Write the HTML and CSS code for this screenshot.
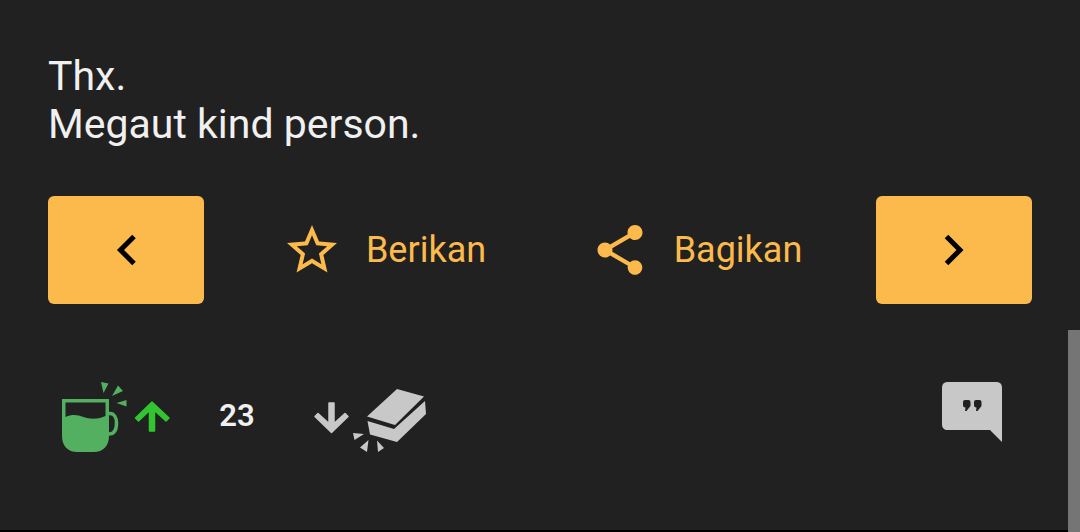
FILE: index.html
```html
<!DOCTYPE html>
<html lang="id">
<head>
<meta charset="utf-8">
<meta name="viewport" content="width=device-width, initial-scale=1">
<title>Megaut kind person</title>
<link rel="stylesheet" href="styles.css">
</head>
<body>
<main class="post">
  <p class="post-text">Thx.<br>Megaut kind person.</p>

  <nav class="post-nav">
    <button class="step" type="button" aria-label="Sebelumnya">
      <svg class="icon-step" viewBox="0 0 24 36"><path d="M20 4.500 6.500 18 20 31.500" fill="none" stroke="currentColor" stroke-width="5"/></svg>
    </button>
    <div class="actions">
      <button class="action" type="button">
        <svg class="icon-action" viewBox="0 0 24 24" fill="currentColor"><path d="M22 9.240l-7.190-.620L12 2 9.190 8.630 2 9.240l5.460 4.730L5.820 21 12 17.270 18.180 21l-1.630-7.030L22 9.240zM12 15.400l-3.760 2.270 1-4.280-3.320-2.880 4.380-.380L12 6.100l1.710 4.040 4.380.380-3.320 2.880 1 4.280L12 15.400z"/></svg>
        <span>Berikan</span>
      </button>
      <button class="action" type="button">
        <svg class="icon-action" viewBox="0 0 24 24" fill="currentColor"><path d="M18 16.080c-.760 0-1.440.300-1.960.770L8.910 12.700c.050-.230.090-.460.090-.700s-.040-.470-.090-.700l7.050-4.110c.540.500 1.250.810 2.040.810 1.660 0 3-1.340 3-3s-1.340-3-3-3-3 1.340-3 3c0 .240.040.470.090.700L8.040 9.810C7.500 9.310 6.790 9 6 9c-1.660 0-3 1.340-3 3s1.340 3 3 3c.790 0 1.500-.310 2.040-.810l7.120 4.160c-.050.210-.080.430-.080.650 0 1.610 1.310 2.920 2.920 2.920s2.920-1.310 2.920-2.920-1.310-2.920-2.920-2.920z"/></svg>
        <span>Bagikan</span>
      </button>
    </div>
    <button class="step" type="button" aria-label="Berikutnya">
      <svg class="icon-step" viewBox="0 0 24 36"><path d="M4.500 4.500 18 18 4.500 31.500" fill="none" stroke="currentColor" stroke-width="5"/></svg>
    </button>
  </nav>

  <div class="votes">
    <button class="vote" type="button" aria-label="Suka">
      <svg class="icon-up" viewBox="60 380 112 74">
        <g fill="#52b060">
          <path fill-rule="evenodd" d="M62 399h47v37c0 10-6 16-15 16H77c-9 0-15-6-15-16zM65.500 402.500V417c7-3 12-2 18 0s13 3 22-1v-13.500z"/>
          <path d="M101 382l7.500 1.500-5 9.500zM118 385.500l5 5.500-11 5zM116.500 403l10-3v6.500z"/>
        </g>
        <path d="M108 413.500h2c4 0 6.500 4 6.500 9.500 0 7-2.500 11-7.500 11h-1" fill="none" stroke="#52b060" stroke-width="3.500"/>
        <path d="M152 402l17 16-3 3-11.500-10.500V431h-5v-20.500L138.500 421l-3-3z" fill="#32c532" stroke="#32c532" stroke-width="1.500" stroke-linejoin="round"/>
      </svg>
    </button>
    <output class="score">23</output>
    <button class="vote" type="button" aria-label="Tidak suka">
      <svg class="icon-down" viewBox="312 380 116 74">
        <path d="M331.500 432.500l-16.500-16 3-3 11 10V403h5v20.500l11-10 3 3z" fill="#c8c8c8" stroke="#c8c8c8" stroke-width="1.500" stroke-linejoin="round"/>
        <path fill="#c8c8c8" d="M397 389l27 7.500L395 425l-28-8.500zM367.500 421l26.500 8 31-28 1 13L397 442l-27-7.500zM353 433l11 1-9.500 6zM368.500 440l-1.500 12-7-4.500zM377 440.500l7 7.500-6 4z"/>
      </svg>
    </button>
    <button class="comment" type="button" aria-label="Komentar">
      <svg class="icon-comment" viewBox="942 380 60 74">
        <path fill="#c8c8c8" d="M948 382h48c4 0 6 2 6 6v54l-12-12h-42c-4 0-6-2-6-6v-36c0-4 2-6 6-6z"/>
        <path fill="#212121" d="M965 400h3.500q2 0 2 2v4l-4 5H965l.5-3.500q-2.500 0-2.500-2.500v-3q0-2 2-2zM976 400h3.500q2 0 2 2v4l-4 5H976l.5-3.500q-2.500 0-2.500-2.500v-3q0-2 2-2z"/>
      </svg>
    </button>
  </div>
</main>
<div class="scroll-thumb"></div>
</body>
</html>
```
FILE: styles.css
```css
* {
  box-sizing: border-box;
}

body {
  margin: 0;
  min-height: 100vh;
  display: flex;
  position: relative;
  background: #212121;
  color: #f0f0f0;
  font-family: Roboto, "Liberation Sans", sans-serif;
}

button {
  border: 0;
  padding: 0;
  background: none;
  color: inherit;
  font: inherit;
  cursor: pointer;
}

svg {
  display: block;
}

.post {
  flex: 1;
  padding: 52px 48px 0;
  border-bottom: 2px solid #000;
}

.post-text {
  margin: 0 0 48px;
  font-size: 41px;
  line-height: 48px;
}

.post-nav {
  display: flex;
  margin-bottom: 76px;
}

.step {
  width: 156px;
  height: 108px;
  display: flex;
  align-items: center;
  justify-content: center;
  border-radius: 6px;
  background: #fcba4c;
  color: #000;
}

.icon-step {
  width: 24px;
  height: 36px;
}

.actions {
  flex: 1;
  display: flex;
  padding: 0 24px;
}

.action {
  flex: 1;
  display: flex;
  align-items: center;
  justify-content: center;
  gap: 24px;
  color: #fcba4c;
  font-size: 36px;
  line-height: 44px;
}

.icon-action {
  width: 60px;
  height: 60px;
}

.votes {
  display: flex;
  align-items: center;
  padding: 0 30px 0 12px;
}

.icon-up {
  width: 112px;
  height: 74px;
}

.icon-down {
  width: 116px;
  height: 74px;
}

.icon-comment {
  width: 60px;
  height: 74px;
}

.score {
  width: 140px;
  padding: 0 10px 4px 0;
  text-align: center;
  font-size: 31px;
  font-weight: 600;
}

.comment {
  margin-left: auto;
}

.scroll-thumb {
  position: absolute;
  right: 0;
  bottom: 0;
  width: 12px;
  height: 38%;
  background: #757575;
}
```
